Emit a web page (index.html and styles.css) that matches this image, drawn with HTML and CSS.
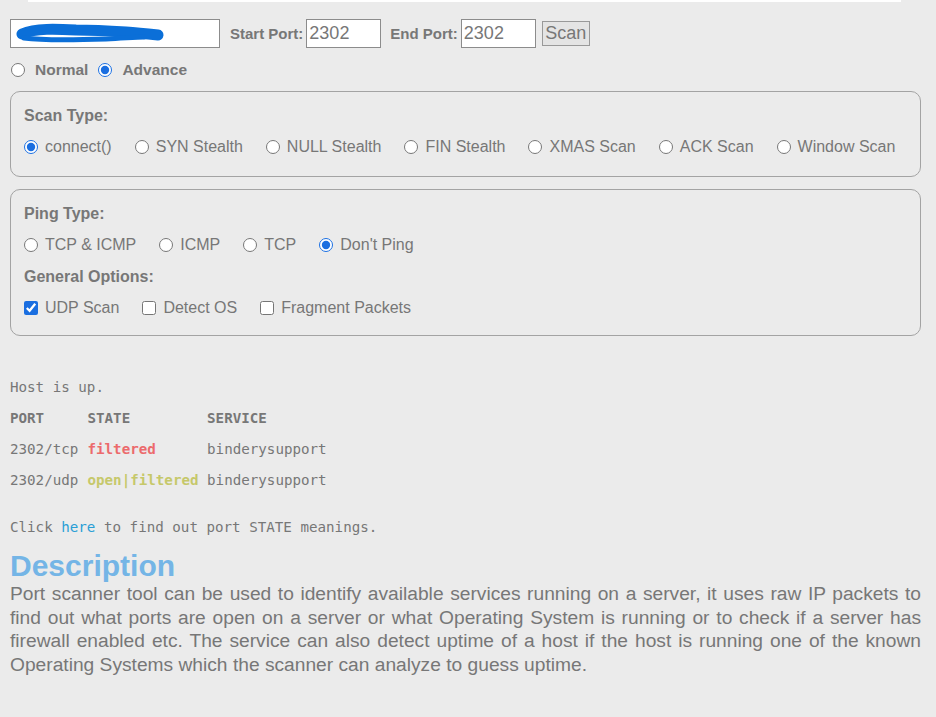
FILE: index.html
```html
<!DOCTYPE html>
<html lang="en">
<head>
<meta charset="UTF-8">
<title>Port Scanner</title>
<link rel="stylesheet" href="styles.css">
</head>
<body>

<div class="top-strip"></div>

<div class="page">
	<form class="scanner" onsubmit="return false;">
		<div class="target-row">
			<span class="host-wrap">
				<input class="host" type="text" value="">
				<svg class="redact" viewBox="0 0 150 24" width="150" height="24">
					<path d="M6,12 C20,6 40,7 60,8 C80,8 95,9 110,10 C122,11 132,12 142,13" stroke="#0b6fd8" stroke-width="11" fill="none" stroke-linecap="round"></path>
					<path d="M8,16 C30,19 60,18 90,17 C110,16 120,15 128,15" stroke="#0b6fd8" stroke-width="5" fill="none" stroke-linecap="round"></path>
				</svg>
			</span>
			<label class="port-label">Start Port:</label>
			<input class="port" type="text" value="2302">
			<label class="port-label end">End Port:</label>
			<input class="port" type="text" value="2302">
			<button class="scan-btn" type="button">Scan</button>
		</div>

		<div class="mode-row">
			<label class="mode"><input type="radio" name="mode"> Normal</label>
			<label class="mode"><input type="radio" name="mode" checked> Advance</label>
		</div>

		<div class="optbox">
			<div class="opt-title">Scan Type:</div>
			<div class="opt-row">
				<label class="opt"><input type="radio" name="scantype" checked>connect()</label>
				<label class="opt"><input type="radio" name="scantype">SYN Stealth</label>
				<label class="opt"><input type="radio" name="scantype">NULL Stealth</label>
				<label class="opt"><input type="radio" name="scantype">FIN Stealth</label>
				<label class="opt"><input type="radio" name="scantype">XMAS Scan</label>
				<label class="opt"><input type="radio" name="scantype">ACK Scan</label>
				<label class="opt"><input type="radio" name="scantype">Window Scan</label>
			</div>
		</div>

		<div class="optbox second">
			<div class="opt-title">Ping Type:</div>
			<div class="opt-row">
				<label class="opt"><input type="radio" name="ping">TCP &amp; ICMP</label>
				<label class="opt"><input type="radio" name="ping">ICMP</label>
				<label class="opt"><input type="radio" name="ping">TCP</label>
				<label class="opt"><input type="radio" name="ping" checked>Don't Ping</label>
			</div>
			<div class="opt-title">General Options:</div>
			<div class="opt-row">
				<label class="opt"><input type="checkbox" checked>UDP Scan</label>
				<label class="opt"><input type="checkbox">Detect OS</label>
				<label class="opt"><input type="checkbox">Fragment Packets</label>
			</div>
		</div>
	</form>

	<div class="results">
		<div class="res-line">Host is up.</div>
		<table class="res-table">
			<tr class="head"><td>PORT</td><td>STATE</td><td>SERVICE</td></tr>
			<tr><td>2302/tcp</td><td class="st-filtered">filtered</td><td>binderysupport</td></tr>
			<tr><td>2302/udp</td><td class="st-open">open|filtered</td><td>binderysupport</td></tr>
		</table>
		<div class="res-line note">Click <a href="#">here</a> to find out port STATE meanings.</div>
	</div>

	<h2 class="desc-title">Description</h2>
	<p class="desc">Port scanner tool can be used to identify available services running on a server, it uses raw IP packets to find out what ports are open on a server or what Operating System is running or to check if a server has firewall enabled etc. The service can also detect uptime of a host if the host is running one of the known Operating Systems which the scanner can analyze to guess uptime.</p>
</div>

</body>
</html>
```

FILE: styles.css
```css
html, body {
	margin: 0;
	padding: 0;
	background: #ebebeb;
}
body {
	font-family: "Liberation Sans", Arial, sans-serif;
	color: #777;
}

.top-strip {
	height: 2px;
	margin: 0 35px 0 28px;
	background: #fff;
}

.page {
	padding: 0 15px 0 10px;
}

/* верхняя строка: хост, порты, кнопка */
.target-row {
	display: flex;
	align-items: center;
	margin-top: 17px;
	height: 29px;
}
.host-wrap {
	position: relative;
	display: inline-block;
	height: 29px;
}
.host, .port {
	box-sizing: border-box;
	height: 29px;
	border: 1px solid #8c8c8c;
	background: #fff;
	font-family: "Liberation Sans", Arial, sans-serif;
	font-size: 18px;
	color: #777;
	padding: 0 2px;
	margin: 0;
	outline: none;
}
.host {
	width: 210px;
}
.redact {
	position: absolute;
	top: 3px;
	left: 6px;
}
.port {
	width: 75px;
}
.port-label {
	font-weight: bold;
	font-size: 15px;
	margin: 0 3px 0 10px;
}
.port-label.end {
	margin-left: 9px;
}
.scan-btn {
	box-sizing: border-box;
	height: 25px;
	width: 48px;
	margin-left: 6px;
	padding: 0;
	border: 1px solid #999;
	background: #e4e4e4;
	font-family: "Liberation Sans", Arial, sans-serif;
	font-size: 18px;
	color: #777;
	border-radius: 0;
}

/* Normal / Advance */
.mode-row {
	display: flex;
	align-items: center;
	height: 20px;
	margin-top: 12px;
	margin-bottom: 11px;
}
.mode {
	display: inline-flex;
	align-items: center;
	font-weight: bold;
	font-size: 15.5px;
	margin-right: 9px;
}
.mode input {
	margin: 0 10px 0 1px;
}

input[type=radio], input[type=checkbox] {
	width: 14px;
	height: 14px;
	accent-color: #1a6ee0;
}

/* блоки опций */
.optbox {
	border: 1px solid #a3a3a3;
	border-radius: 10px;
	padding: 15px 13px 20px;
	margin-bottom: 12px;
}
.optbox.second {
	padding-bottom: 18px;
}
.opt-title {
	font-weight: bold;
	font-size: 16px;
	line-height: 18px;
	margin-bottom: 13px;
}
.opt-row + .opt-title {
	margin-top: 14px;
}
.opt-row {
	display: flex;
	align-items: center;
	gap: 23px;
	height: 18px;
}
.opt {
	display: inline-flex;
	align-items: center;
	gap: 7px;
	font-size: 16px;
}
.opt input {
	margin: 0;
}

/* результаты */
.results {
	margin-top: 36px;
	font-family: "DejaVu Sans Mono", "Liberation Mono", monospace;
	font-size: 14.2px;
	color: #777;
}
.res-line {
	line-height: 31px;
	height: 31px;
	white-space: pre;
}
.res-line.note {
	margin-top: 16px;
}
.res-line a {
	color: #2a9fd6;
	text-decoration: none;
}
.res-table {
	border-collapse: collapse;
}
.res-table td {
	padding: 0 8.5px 0 0;
	line-height: 31px;
	white-space: pre;
}
.res-table .head td {
	font-weight: bold;
}
.res-table td:first-child {
	width: 69px;
}
.res-table td:nth-child(2) {
	width: 111px;
}
.st-filtered {
	color: #ec6a6c;
	font-weight: bold;
}
.st-open {
	color: #c6c86a;
	font-weight: bold;
}

.desc-title {
	margin: 6px 0 0;
	font-size: 30px;
	line-height: 33px;
	color: #74b5e6;
}
.desc {
	margin: 0;
	font-size: 19.2px;
	line-height: 23.5px;
	text-align: justify;
}
```
